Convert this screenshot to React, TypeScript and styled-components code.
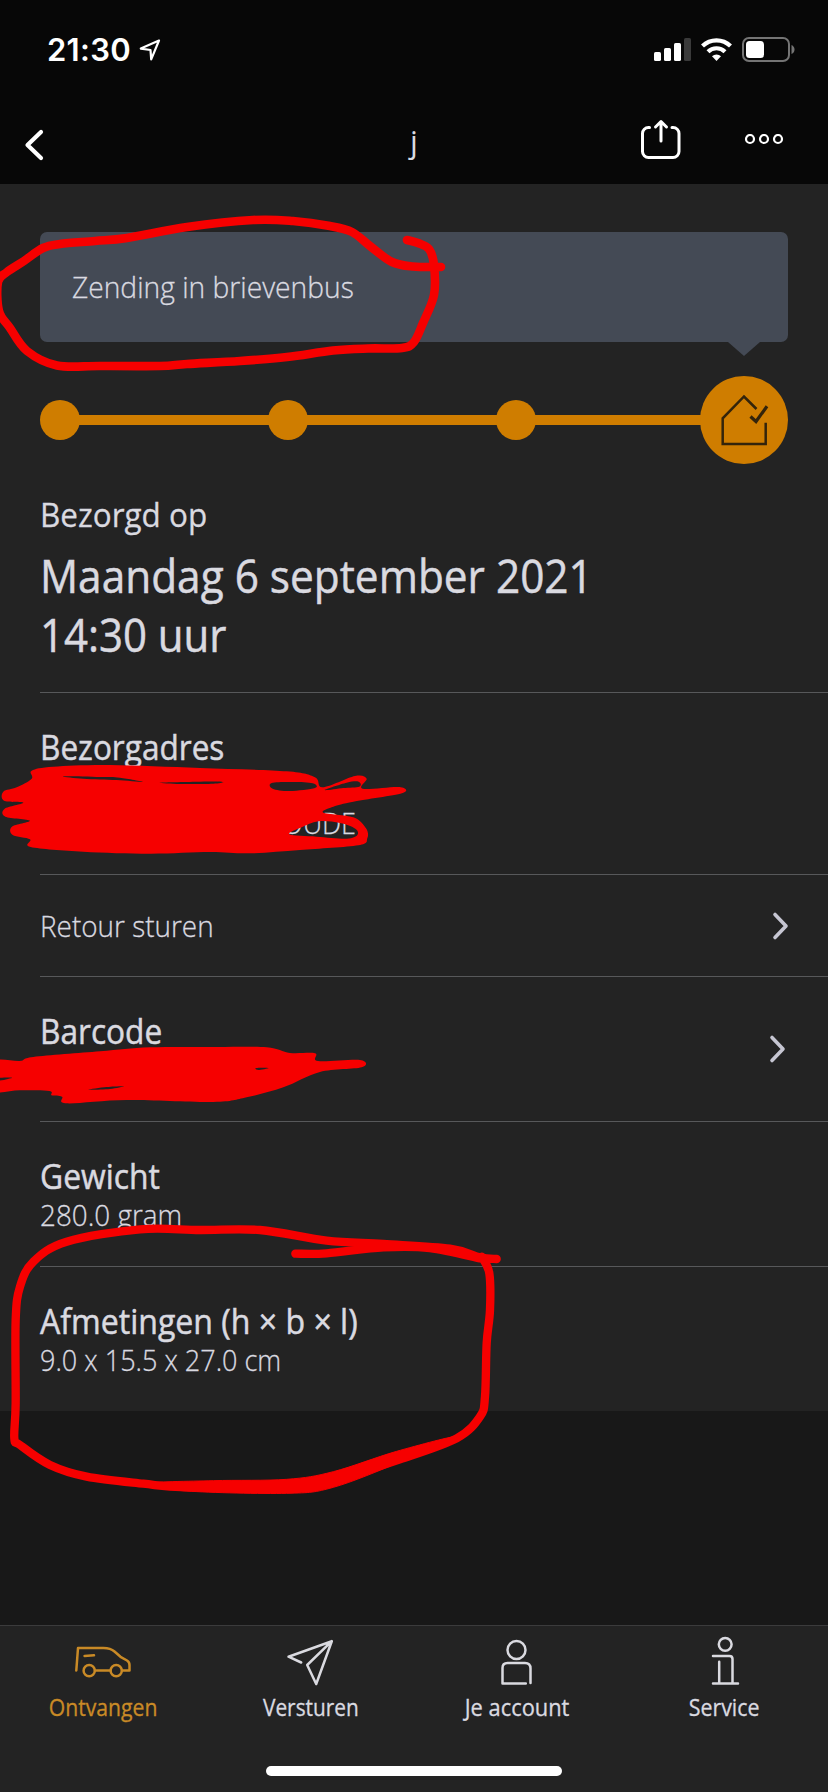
import React from "react";
import styled, { createGlobalStyle, css } from "styled-components";

const color = {
  black: "#070707",
  page: "#181818",
  panel: "#232323",
  card: "#444a55",
  line: "#57585a",
  text: "#dadae0",
  orange: "#cf7d00",
  tabOrange: "#c98a26",
  pen: "#f60000",
};

const GlobalStyle = createGlobalStyle`
  * { box-sizing: border-box; }
  body { margin: 0; background: ${color.page}; }
`;

/* The type is set slightly condensed. */
const condensed = css<{ $width: number }>`
  transform: scaleX(${(p) => p.$width});
  transform-origin: 0 50%;
  white-space: nowrap;
`;

const Screen = styled.div`
  position: relative;
  width: 828px;
  height: 1792px;
  overflow: hidden;
  display: flex;
  flex-direction: column;
  background: ${color.page};
  color: ${color.text};
  font-family: "Open Sans", "Noto Sans", sans-serif;
`;

const StatusBar = styled.div`
  flex: none;
  height: 98px;
  padding: 28px 33px 0 47px;
  display: flex;
  justify-content: space-between;
  background: ${color.black};
`;

const Clock = styled.div`
  display: flex;
  align-items: center;
  gap: 8px;
  height: 44px;
  color: #fff;
  font: 600 31px/44px Inter, sans-serif;
  letter-spacing: 0.3px;
`;

const StatusIcons = styled.svg`
  width: 144px;
  height: 44px;
`;

const NavBar = styled.header`
  flex: none;
  height: 86px;
  padding: 0 40px 0 20px;
  display: grid;
  grid-template-columns: 160px 1fr 160px;
  align-items: center;
  background: ${color.black};
`;

const NavTitle = styled.h1`
  margin: 0;
  padding: 0 0 0 20px;
  text-align: center;
  font-size: 31px;
  line-height: 40px;
  font-weight: 400;
`;

const NavActions = styled.div`
  display: flex;
  justify-content: space-between;
  align-items: center;
  margin: 0 4px 0 12px;
`;

const Panel = styled.main`
  flex: none;
  background: ${color.panel};
  padding-top: 48px;
`;

const Notice = styled.div`
  position: relative;
  height: 110px;
  margin: 0 40px;
  padding: 37px 32px;
  border-radius: 7px;
  background: ${color.card};

  &::after {
    content: "";
    position: absolute;
    top: 100%;
    right: 28px;
    border: 16px solid transparent;
    border-top: 14px solid ${color.card};
    border-bottom: 0;
  }
`;

const Tracker = styled.div`
  display: flex;
  align-items: center;
  margin: 34px 40px 0;
  height: 88px;
`;

const Stop = styled.span`
  width: 40px;
  height: 40px;
  border-radius: 50%;
  background: ${color.orange};
`;

const Track = styled.span`
  flex: 1 1 0;
  height: 10px;
  margin: 0 -2px;
  background: ${color.orange};
`;

const Destination = styled.span`
  width: 88px;
  height: 88px;
  margin-left: -24px;
  border-radius: 50%;
  background: ${color.orange};
`;

const Delivered = styled.section`
  margin-left: 40px;
  padding: 31px 0 28px;
  height: 229px;
  border-bottom: 1px solid ${color.line};
`;

const DeliveredLabel = styled.div<{ $width: number }>`
  ${condensed}
  margin-bottom: 11px;
  font-size: 33px;
  line-height: 40px;
  -webkit-text-stroke: 0.3px ${color.text};
`;

const DeliveredDate = styled.div<{ $width: number }>`
  ${condensed}
  font-size: 46px;
  line-height: 59px;
  -webkit-text-stroke: 0.5px ${color.text};
`;

const Row = styled.section<{ $height: number; $last?: boolean }>`
  display: flex;
  align-items: center;
  justify-content: space-between;
  height: ${(p) => p.$height}px;
  margin-left: 40px;
  padding-right: ${(p) => (p.$height < 110 ? 39 : 42)}px;
  border-bottom: ${(p) => (p.$last ? 0 : 1)}px solid ${color.line};
`;

const RowBody = styled.div`
  display: flex;
  flex-direction: column;
  gap: 1px;
`;

const Label = styled.div<{ $width: number }>`
  ${condensed}
  font-size: 34px;
  line-height: 40px;
  -webkit-text-stroke: 0.5px ${color.text};
`;

const Value = styled.div<{ $width: number }>`
  ${condensed}
  min-height: 36px;
  font-size: 30px;
  line-height: 36px;
  font-weight: 300;
  -webkit-text-stroke: 0.3px ${color.text};
`;

const AddressEnd = styled(Value)`
  margin-left: 242px;
`;

const Chevron = styled.svg`
  width: 18px;
  height: 32px;
`;

const TabBar = styled.nav`
  flex: none;
  margin-top: auto;
  height: 167px;
  padding-top: 6px;
  display: grid;
  grid-template-columns: repeat(4, 1fr);
  grid-template-rows: 134px 10px;
  justify-items: center;
  background: ${color.panel};
  border-top: 1px solid #3b3b3c;
`;

const Tab = styled.div<{ $active?: boolean }>`
  display: flex;
  flex-direction: column;
  align-items: center;
  gap: 4px;
  color: ${(p) => (p.$active ? color.tabOrange : color.text)};
`;

const TabLabel = styled.span<{ $width: number }>`
  ${condensed}
  transform-origin: 50% 50%;
  font-size: 23px;
  line-height: 30px;
  -webkit-text-stroke: 0.3px currentColor;
`;

const TabIcon = styled.svg`
  width: 60px;
  height: 56px;
  fill: none;
  stroke: currentColor;
  stroke-width: 2.5;
  stroke-linecap: round;
  stroke-linejoin: round;
`;

const HomeIndicator = styled.div`
  grid-column: 1 / -1;
  width: 296px;
  height: 10px;
  border-radius: 5px;
  background: #fff;
`;

const PenLayer = styled.svg`
  position: absolute;
  inset: 0;
  width: 828px;
  height: 1792px;
  pointer-events: none;
  fill: none;
  stroke: ${color.pen};
  stroke-linecap: round;
  stroke-linejoin: round;
`;

type Point = [number, number];

/* Catmull-Rom spline through the given points. */
function curve(points: Point[], closed = false): string {
  const n = points.length;
  const at = (i: number) => (closed ? points[(i + n) % n] : points[Math.max(0, Math.min(n - 1, i))]);
  let d = `M${points[0][0]} ${points[0][1]}`;
  for (let i = 0; i < (closed ? n : n - 1); i++) {
    const [a, b, c, e] = [at(i - 1), at(i), at(i + 1), at(i + 2)];
    d += `C${b[0] + (c[0] - a[0]) / 6} ${b[1] + (c[1] - a[1]) / 6} ${c[0] - (e[0] - b[0]) / 6} ${c[1] - (e[1] - b[1]) / 6} ${c[0]} ${c[1]}`;
  }
  return closed ? d + "Z" : d;
}

const noticeLoop: Point[] = [
  [407, 240], [418, 243], [429, 249], [434, 265], [434, 295], [423, 323], [414, 342], [402, 348], [368, 348.5], [333, 350.5],
  [287, 357], [240, 361], [187, 364], [160, 366], [100, 366], [57, 365.5], [27, 351], [10, 328], [-1, 311], [-2, 282],
  [7, 272], [24, 261], [43, 248], [60, 244], [95, 241], [127, 238], [187, 227], [253, 220], [293, 221], [330, 226],
  [352, 232], [370, 246], [392, 262], [413, 266.5], [441, 267],
];

const sizeLoop: Point[] = [
  [1490, 147], [1440, 142], [1350, 116], [1150, 102], [980, 92], [780, 60], [600, 60], [420, 58], [200, 95], [100, 155], [60, 230],
  [47, 330], [47, 580], [43, 685], [60, 705], [150, 765], [260, 800], [430, 821], [560, 832], [860, 832], [1000, 810],
  [1200, 748], [1370, 685], [1440, 620], [1455, 560], [1460, 400], [1470, 300], [1468, 190], [1445, 140],
];
const sizeTail: Point[] = [[886, 131], [980, 130], [1150, 112], [1290, 114], [1440, 145]];
const sizeBulge: Point[] = [
  [440, 820], [640, 812], [860, 808], [1000, 785], [1190, 724], [1370, 680], [1200, 756], [1000, 832], [860, 850], [560, 843],
];

const addressMask = [
  curve([
    [95, 212], [160, 200], [330, 195], [600, 204], [860, 214], [945, 232], [968, 262], [1065, 228], [1100, 236], [1088, 266],
    [1198, 261], [1206, 280], [1060, 305], [1000, 320], [970, 338], [1060, 352], [1098, 385], [1102, 415], [1075, 436],
    [900, 450], [750, 460], [630, 456], [450, 461], [250, 455], [92, 441], [90, 418], [38, 405], [36, 380], [90, 362],
    [16, 350], [14, 326], [70, 308], [12, 302], [10, 275], [50, 262], [95, 236],
  ], true),
  curve([[190, 229], [300, 231], [360, 233], [430, 246], [350, 240], [250, 236]], true),
  curve([[480, 248], [600, 245], [668, 246], [640, 251], [540, 252]], true),
  curve([[815, 249], [880, 246], [938, 250], [945, 264], [870, 273], [818, 266]], true),
  curve([[974, 270], [1040, 248], [1076, 245], [1078, 260], [1030, 264]], true),
  curve([[868, 403], [905, 382], [955, 364], [1020, 369], [1066, 386], [1072, 405], [1040, 416], [950, 410]], true),
].join("");

const barcodeMask = [
  curve([
    [-20, 245], [60, 243], [100, 231], [300, 214], [450, 202], [650, 201], [800, 202], [870, 219], [945, 220], [954, 243],
    [1080, 240], [1085, 262], [960, 276], [850, 322], [740, 352], [640, 366], [380, 360], [200, 370], [186, 350],
    [155, 346], [148, 333], [60, 331], [-20, 331],
  ], true),
  curve([[-10, 294], [37, 293], [-10, 303]], true),
  curve([[265, 329], [320, 321], [372, 319], [330, 327]], true),
  curve([[768, 264], [806, 264], [775, 270]], true),
].join("");

function RightChevron() {
  return (
    <Chevron viewBox="0 0 18 32" fill="none" stroke="#c6c6d2" strokeWidth="3.6" strokeLinecap="round" strokeLinejoin="round">
      <path d="M4 4.5 15 16 4 27.5" />
    </Chevron>
  );
}

export default function App() {
  return (
    <Screen>
      <GlobalStyle />
      <StatusBar>
        <Clock>
          21:30
          <svg width="22" height="22" viewBox="0 0 22 22" fill="none" stroke="#fff" strokeWidth="2.2" strokeLinejoin="round">
            <path d="M20 1.5 1.8 9.6 11.5 11 12.2 20.3Z" />
          </svg>
        </Clock>
        <StatusIcons viewBox="-1 0 144 44">
          <g fill="#fff">
            <rect x="2" y="24" width="7" height="9" rx="1.6" />
            <rect x="12" y="20" width="7" height="13" rx="1.6" />
            <rect x="22" y="15" width="7" height="18" rx="1.6" />
            <rect x="32" y="10" width="7" height="23" rx="1.6" fill="#3a3a3a" />
            <path d="M64.500 33 60 28.300a6.500 6.500 0 0 1 9 0z" />
          </g>
          <g fill="none" stroke="#fff" strokeWidth="4.200">
            <path d="M50.500 18a20 20 0 0 1 28 0" />
            <path d="M56 23.700a12.200 12.200 0 0 1 17 0" />
          </g>
          <rect x="91" y="10" width="46" height="23" rx="6" fill="none" stroke="#747474" strokeWidth="2" />
          <rect x="94" y="13" width="18" height="17" rx="3.500" fill="#fff" />
          <path d="M139.500 17q3 1.500 3 4.500t-3 4.500z" fill="#747474" />
        </StatusIcons>
      </StatusBar>
      <NavBar>
        <svg width="26" height="40" viewBox="0 0 26 40" fill="none" stroke="#fff" strokeWidth="4.200" strokeLinecap="round" strokeLinejoin="round">
          <path d="M21 11 7.500 24 21 37" />
        </svg>
        <NavTitle>j</NavTitle>
        <NavActions>
          <svg width="42" height="44" viewBox="0 0 42 44" fill="none" stroke="#fff" strokeWidth="3" strokeLinecap="round" strokeLinejoin="round">
            <path d="M9.500 8.500H8.500a6 6 0 0 0-6 6V32.500a6 6 0 0 0 6 6H33a6 6 0 0 0 6-6V14.500a6 6 0 0 0-6-6H32" />
            <path d="M21 22V2.500M15.500 8 21 2.500 26.500 8" />
          </svg>
          <svg width="40" height="14" viewBox="0 0 40 14" fill="none" stroke="#fff" strokeWidth="2.200">
            <circle cx="6" cy="5" r="4" />
            <circle cx="20" cy="5" r="4" />
            <circle cx="34" cy="5" r="4" />
          </svg>
        </NavActions>
      </NavBar>
      <Panel>
        <Notice>
          <Value $width={0.94}>Zending in brievenbus</Value>
        </Notice>
        <Tracker>
          <Stop />
          <Track />
          <Stop />
          <Track />
          <Stop />
          <Track />
          <Destination>
            <svg width="88" height="88" viewBox="0 0 88 88" fill="none" stroke="#33240b" strokeWidth="2.500">
              <path d="M56.500 33 44 20.500 22.700 42.300V68H65.700V46.700" />
              <path d="M50.500 40.500 56 45.500 67 30.200" strokeWidth="3.200" />
            </svg>
          </Destination>
        </Tracker>
        <Delivered>
          <DeliveredLabel $width={0.953}>Bezorgd op</DeliveredLabel>
          <DeliveredDate $width={0.921}>Maandag 6 september 2021</DeliveredDate>
          <DeliveredDate $width={0.912}>14:30 uur</DeliveredDate>
        </Delivered>
        <Row $height={182}>
          <RowBody>
            <Label $width={0.928}>Bezorgadres</Label>
            <Value $width={0.9} />
            <AddressEnd $width={0.9}>OUDE</AddressEnd>
          </RowBody>
        </Row>
        <Row $height={102}>
          <Value $width={0.93}>Retour sturen</Value>
          <RightChevron />
        </Row>
        <Row $height={145}>
          <RowBody>
            <Label $width={0.93}>Barcode</Label>
            <Value $width={0.9} />
          </RowBody>
          <RightChevron />
        </Row>
        <Row $height={145}>
          <RowBody>
            <Label $width={0.937}>Gewicht</Label>
            <Value $width={0.928}>280.0 gram</Value>
          </RowBody>
        </Row>
        <Row $height={144} $last>
          <RowBody>
            <Label $width={0.943}>Afmetingen (h × b × l)</Label>
            <Value $width={0.9}>9.0 x 15.5 x 27.0 cm</Value>
          </RowBody>
        </Row>
      </Panel>
      <TabBar>
        <Tab $active>
          <TabIcon viewBox="73.500 1632 60 56">
            <path d="M76.800 1670.500 78.500 1648H104Q111 1648 115 1651.500L121 1656.800 127.500 1660.500Q130 1662 130 1665V1670.500H123M111 1670.500H95.500M85 1656 94.500 1655.300" />
            <circle cx="89.700" cy="1670.700" r="5.600" />
            <circle cx="116.700" cy="1670.700" r="5.600" />
          </TabIcon>
          <TabLabel $width={0.92}>Ontvangen</TabLabel>
        </Tab>
        <Tab>
          <TabIcon viewBox="280.500 1632 60 56">
            <path d="M300.700 1662.500 288 1656.700 331.300 1641.200 315.700 1684 306.700 1665 331.300 1641.200" />
          </TabIcon>
          <TabLabel $width={0.905}>Versturen</TabLabel>
        </Tab>
        <Tab>
          <TabIcon viewBox="487.500 1632 60 56">
            <circle cx="517" cy="1650" r="9" />
            <path d="M526.300 1683.500H503V1668Q503 1663 508 1663H525.500Q531 1663 531 1668.500V1683" />
          </TabIcon>
          <TabLabel $width={0.95}>Je account</TabLabel>
        </Tab>
        <Tab>
          <TabIcon viewBox="694.500 1632 60 56">
            <circle cx="724.700" cy="1644.300" r="6.400" />
            <path d="M712.500 1656H729Q732 1656 732 1659V1683.500M718.700 1661.700V1683.500M712.500 1683.500H737.500" />
          </TabIcon>
          <TabLabel $width={0.93}>Service</TabLabel>
        </Tab>
        <HomeIndicator />
      </TabBar>
      <PenLayer viewBox="0 0 828 1792">
        <path d={curve(noticeLoop)} strokeWidth="8.600" />
        <g fill={color.pen} fillRule="evenodd" stroke="none">
          <path d={addressMask} transform="translate(0 700) scale(0.33333)" />
          <path d={barcodeMask} transform="translate(0 980) scale(0.33333)" />
        </g>
        <g transform="translate(0 1210) scale(0.33333)" strokeWidth="25">
          <path d={curve(sizeLoop)} />
          <path d={curve(sizeTail)} />
          <path d={curve(sizeBulge, true)} fill={color.pen} strokeWidth="3" />
        </g>
      </PenLayer>
    </Screen>
  );
}
